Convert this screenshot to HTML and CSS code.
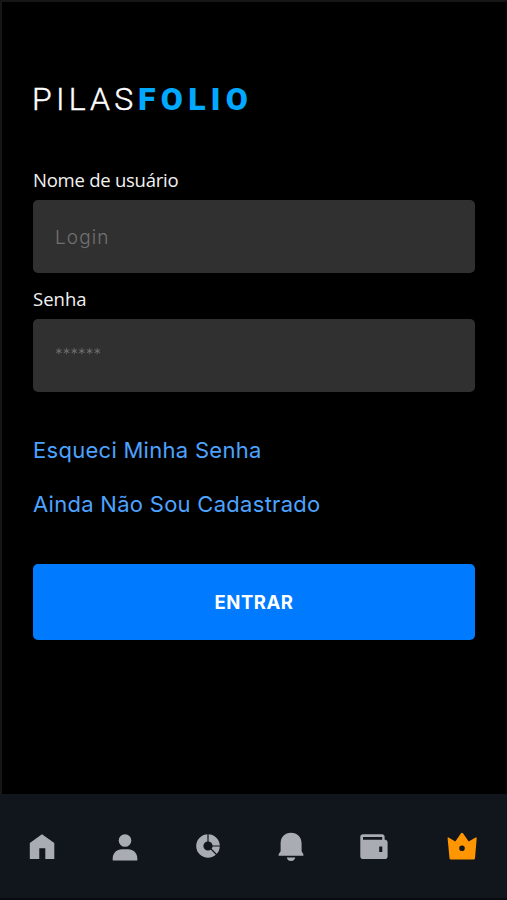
FILE: index.html
```html
<!DOCTYPE html>
<html lang="pt-BR">
<head>
    <meta charset="UTF-8">
    <meta name="viewport" content="width=device-width, initial-scale=1.0">
    <title>PilasFolio</title>
    <link rel="stylesheet" href="styles.css">
</head>
<body>
    <main class="login">
        <h1 class="logo"><span class="logo-light">PILAS</span><span class="logo-bold">FOLIO</span></h1>

        <form class="login-form">
            <label class="label-user" for="usuario">Nome de usuário</label>
            <input class="input-user" type="text" id="usuario" placeholder="Login">
            <label class="label-pass" for="senha">Senha</label>
            <input class="input-pass" type="password" id="senha" placeholder="******">

            <a href="#" class="link link-forgot">Esqueci Minha Senha</a>
            <a href="#" class="link link-register">Ainda Não Sou Cadastrado</a>

            <button type="button"><span>ENTRAR</span></button>
        </form>
    </main>

    <nav class="menu">
        <a href="#" aria-label="Início">
            <svg viewBox="0 0 34 34"><path d="M17 5.3 29.3 14V30H20.3V19.3H14.3V30H4.8V14Z"/></svg>
        </a>
        <a href="#" aria-label="Perfil">
            <svg viewBox="0 0 34 34"><circle cx="17" cy="11.5" r="6.3"/><path d="M4.7 31.6V29.3C4.7 24 8.7 20.2 14 20.2H20C25.3 20.2 29.3 24 29.3 29.3V31.6Z"/></svg>
        </a>
        <a href="#" aria-label="Carteira">
            <svg viewBox="0 0 34 34"><circle class="ring" cx="17" cy="17" r="8.2"/><path class="cut" d="M17 13V4M21 17H30M20 20 26.5 26.5"/></svg>
        </a>
        <a href="#" aria-label="Alertas">
            <svg viewBox="0 0 34 34"><path d="M4.6 26.8V25.2L6.6 22.3V14.5C6.6 8 10.8 3.7 17 3.7S27.6 8 27.6 14.5V22.3L29.4 25.2V26.8ZM12.8 28.5H21.3C20.7 30.9 19.2 32.1 17 32.1S13.3 30.9 12.8 28.5Z"/></svg>
        </a>
        <a href="#" aria-label="Saldo">
            <svg viewBox="0 0 34 34"><path fill-rule="evenodd" d="M6 5.2H25Q27.6 5.2 27.6 8V10.5Q30.6 11 30.6 13.5V27.2Q30.6 30 27.8 30H6.2Q3.3 30 3.3 27.2V8Q3.3 5.2 6 5.2ZM6 8V10.8H25.2V8ZM22.2 17.5V23H25.3V17.5Z"/></svg>
        </a>
        <a href="#" class="premium" aria-label="Premium">
            <svg viewBox="0 0 34 34"><path fill-rule="evenodd" d="M2.6 9.3Q2.3 8 3.6 8.6L10.3 12.5 16 4.2Q17 3.2 18 4.2L23.7 12.5 30.6 8.6Q32 8 31.7 9.3L30 29.2Q29.8 30.5 28.5 30.5H5.9Q4.6 30.5 4.5 29.2ZM17 16.4A2.8 2.8 0 1 0 17 22 2.8 2.8 0 1 0 17 16.4Z"/></svg>
        </a>
    </nav>
</body>
</html>
```
FILE: styles.css
```css
* {
    box-sizing: border-box;
}

body {
    margin: 0;
    height: 900px;
    display: flex;
    flex-direction: column;
    background-color: #000;
    font-family: 'Inter', sans-serif;
    overflow: hidden;
}

.login {
    height: 794px;
    padding: 77px 31px 0 31px;
    border-top: 2px solid #161616;
    border-left: 2px solid #161616;
    border-right: 1px solid #080808;
}

.logo {
    display: flex;
    margin: 0;
    height: 40px;
    font-family: 'Roboto', sans-serif;
    font-size: 32px;
    line-height: 40px;
    white-space: nowrap;
}

.logo-light {
    width: 106px;
    color: #fff;
    font-weight: 300;
    letter-spacing: 4.2px;
    margin-left: -1px;
    -webkit-text-stroke: 0.4px #fff;
}

.logo-bold {
    color: #00a8ff;
    font-weight: 900;
    letter-spacing: 5.3px;
}

.login-form {
    display: flex;
    flex-direction: column;
}

label {
    height: 24px;
    line-height: 24px;
    font-family: 'Open Sans', sans-serif;
    font-size: 18.5px;
    color: #f2f2f2;
}

.label-user {
    margin-top: 49px;
    letter-spacing: -0.25px;
}

.label-pass {
    margin-top: 14px;
}

input {
    width: 100%;
    height: 73px;
    margin-top: 8px;
    padding: 0 22px;
    border: 0;
    border-radius: 5px;
    background-color: #303030;
    color: #fff;
    font-family: 'Inter', sans-serif;
    font-size: 19px;
}

input::placeholder {
    color: #707070;
    opacity: 1;
    font-weight: 300;
}

.input-user {
    padding-top: 2px;
}

.input-user::placeholder {
    letter-spacing: 1.1px;
}

.input-pass {
    padding-bottom: 6px;
}

.input-pass::placeholder {
    font-size: 15px;
    letter-spacing: 0.2px;
}

.link {
    align-self: flex-start;
    height: 30px;
    line-height: 30px;
    color: #4da3ff;
    font-size: 22px;
    letter-spacing: 0.28px;
    text-decoration: none;
    white-space: nowrap;
}

.link-forgot {
    margin-top: 43px;
}

.link-register {
    margin-top: 24px;
}

button {
    height: 76px;
    margin-top: 45px;
    border: 0;
    border-radius: 5px;
    background-color: #007bff;
    color: #fff;
    font-family: 'Inter', sans-serif;
    font-size: 18.5px;
    font-weight: 700;
    letter-spacing: 0.5px;
}

.menu {
    display: flex;
    height: 106px;
    padding: 35px 0 0 25px;
    gap: 49px;
    background-color: #11161c;
    border-bottom: 2px solid #080b10;
}

.menu a {
    width: 34px;
    height: 34px;
    color: #a9acb3;
}

.menu svg {
    display: block;
    width: 34px;
    height: 34px;
    fill: currentColor;
}

.menu .ring {
    fill: none;
    stroke: currentColor;
    stroke-width: 7.2;
}

.menu .cut {
    fill: none;
    stroke: #11161c;
    stroke-width: 1.2;
}

.menu .premium {
    margin-left: 5px;
    color: #ff9500;
}
```
